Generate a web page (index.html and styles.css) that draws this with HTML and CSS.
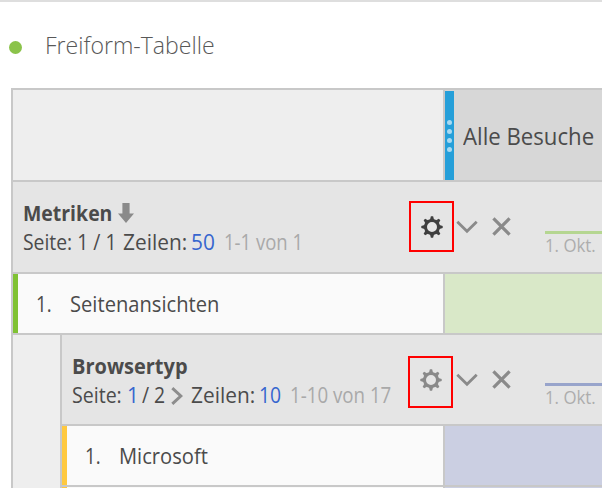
FILE: index.html
```
<!DOCTYPE html>
<html lang="de">
<head>
<meta charset="utf-8">
<title>Freiform-Tabelle</title>
<link rel="stylesheet" href="styles.css">
</head>
<body>
<svg class="defs" aria-hidden="true">
  <symbol id="gear" viewBox="0 0 22 22">
    <circle cx="11" cy="11" r="6.5" fill="none" stroke="currentColor" stroke-width="3"/>
    <g fill="currentColor">
      <path id="tooth" d="M8.800 4.200 9.900 .3h2.200L13.200 4.200z"/>
      <use href="#tooth" transform="rotate(45 11 11)"/>
      <use href="#tooth" transform="rotate(90 11 11)"/>
      <use href="#tooth" transform="rotate(135 11 11)"/>
      <use href="#tooth" transform="rotate(180 11 11)"/>
      <use href="#tooth" transform="rotate(225 11 11)"/>
      <use href="#tooth" transform="rotate(270 11 11)"/>
      <use href="#tooth" transform="rotate(315 11 11)"/>
    </g>
  </symbol>
  <symbol id="chevron" viewBox="0 0 22 14"><path d="M1.3 1.7 11 11.2 20.7 1.7" fill="none" stroke="currentColor" stroke-width="2.8"/></symbol>
  <symbol id="cross" viewBox="0 0 20 20"><path d="M1.5 1.5 18.5 18.5M18.5 1.5 1.5 18.5" fill="none" stroke="currentColor" stroke-width="3.4"/></symbol>
</svg>
<header class="title"><i class="dot"></i><h1>Freiform-Tabelle</h1></header>
<main class="table">
  <div class="row head">
    <div class="corner"></div>
    <div class="segment">
      <div class="grip"><i></i><i></i><i></i><i></i></div>
      <span class="seg-name">Alle Besuche</span>
    </div>
  </div>
  <section class="row group">
    <div class="info">
      <h2><span class="name metrics">Metriken</span><svg class="sort" viewBox="0 0 16 20"><path d="M4.4 0h7.2v10.500H16L8 20 0 10.500h4.400z" fill="#8a8a8a"/></svg></h2>
      <p class="paging"><span class="p-seite">Seite: 1 / 1</span><span class="p-zeilen">Zeilen:</span><a>50</a><span class="range r1">1-1 von 1</span></p>
    </div>
    <div class="tools"><span class="mark"><svg class="gear dark"><use href="#gear"/></svg></span><svg class="chevron"><use href="#chevron"/></svg><svg class="cross" viewBox="0 0 20 20"><use href="#cross"/></svg></div>
    <div class="spark green"><span>1. Okt.</span></div>
  </section>
  <div class="row item green">
    <div class="label"><span class="num">1.</span><span class="wide">Seitenansichten</span></div>
    <div class="cell"></div>
  </div>
  <div class="nested">
    <section class="row group">
      <div class="info">
        <h2><span class="name browser">Browsertyp</span></h2>
        <p class="paging"><span class="n-seite">Seite:</span><a class="n-page">1</a><span class="n-total">/ 2</span><svg class="next" viewBox="0 0 12 18"><path d="M1.300 1.200 9.800 9 1.300 16.800" fill="none" stroke="#8d8d8d" stroke-width="3"/></svg><span class="p-zeilen">Zeilen:</span><a class="n-rows">10</a><span class="range r2">1-10 von 17</span></p>
      </div>
      <div class="tools"><span class="mark"><svg class="gear"><use href="#gear"/></svg></span><svg class="chevron"><use href="#chevron"/></svg><svg class="cross" viewBox="0 0 20 20"><use href="#cross"/></svg></div>
      <div class="spark blue"><span>1. Okt.</span></div>
    </section>
    <div class="row item blue">
      <div class="label"><span class="num">1.</span><span class="wide">Microsoft</span></div>
      <div class="cell"></div>
    </div>
    <div class="row item blue"><div class="label"></div><div class="cell"></div></div>
  </div>
</main>
</body>
</html>
```
FILE: styles.css
```
* { box-sizing: border-box; }
html, body { height: 488px; overflow: hidden; }
body {
  margin: 0;
  background: #fff;
  border-top: 2px solid #dedede;
  color: #4b4b4b;
  font: 400 21.5px/28px "Open Sans", sans-serif;
  white-space: nowrap;
}
h1, h2, p { margin: 0; font-size: inherit; }
svg { display: block; flex: none; }
.defs { position: absolute; width: 0; height: 0; }

/* Narrowed lettering: each text scales from its left edge */
h1, span:not(.mark), a {
  display: block;
  flex: none;
  transform: scaleX(var(--narrow, 0.9));
  transform-origin: 0 50%;
}

.title { display: flex; align-items: center; height: 86px; padding-left: 9px; }
.title .dot { width: 13px; height: 13px; margin: 5px 23px 0 0; border-radius: 50%; background: #8bc34a; }
.title h1 { --narrow: 0.942; margin-top: -1px; font-size: 24.5px; font-weight: 340; color: #585858; }

.table { width: 620px; height: 410px; margin-left: 11px; border: solid #c8c8c8; border-width: 2px 0 0 2px; background: #eee; overflow: hidden; }
.row { display: flex; border-bottom: 2px solid #c8c8c8; }
.corner { width: 430px; background: #eee; }
.head { height: 92px; }
.segment { display: flex; align-items: center; flex: 1; border-left: 2px solid #c8c8c8; background: #d7d7d7; }
.grip { display: flex; flex-direction: column; align-items: center; justify-content: center; gap: 4px; align-self: stretch; width: 9px; margin: 1px 9px 0 0; background: #259fd9; }
.grip i { width: 5px; height: 5px; border-radius: 50%; background: #a8daf2; }
.seg-name { --narrow: 0.925; margin-top: 2px; font-size: 24px; }

.group { height: 92px; background: #e5e5e5; }
.info { flex: 1; padding: 17px 0 0 10px; }
.info h2 { display: flex; height: 29px; font-weight: 700; }
.metrics { --narrow: 0.905; width: 95px; }
.browser { --narrow: 0.93; }
.sort { width: 16px; height: 20px; margin-top: 4px; }
.paging { display: flex; }
.paging a { --narrow: 0.97; color: #3766cf; width: 33px; }
.p-seite { width: 100px; }
.p-zeilen { --narrow: 0.97; width: 68px; }
.range { color: #a9a9a9; }
.r1 { --narrow: 0.86; }
.r2 { --narrow: 0.87; position: relative; left: -2px; }
.n-seite { --narrow: 0.91; width: 55px; }
.paging .n-page { width: 15px; }
.paging .n-rows { --narrow: 0.9; }
.n-total { width: 29px; }
.next { width: 12px; height: 18px; margin: 6px 8px 0 0; }

.tools { display: flex; color: #8a8a8a; }
.mark { display: grid; place-items: center; width: 45px; height: 51px; margin: 19px 2px 0 0; border: 2px solid #f00; }
.gear { width: 22px; height: 22px; }
.gear.dark { color: #3f3f3f; }
.chevron { width: 22px; height: 14px; margin: 38px 14px 0 0; }
.cross { width: 19px; height: 19px; margin: 35px 1px 0 0; }
.spark { width: 86px; margin: 49px 0 0 33px; border-top: 3px solid #b5d691; font-size: 17.500px; line-height: 22px; color: #adadad; }
.spark span { --narrow: 0.96; }
.spark.blue { border-color: #98a4cb; margin-top: 48px; }

.item { height: 61px; }
.label { display: flex; align-items: center; width: 430px; border-left: 5px solid #80c233; background: #fafafa; }
.num { --narrow: 0.87; width: 35px; margin-left: 18px; }
.num + .wide { margin-left: -1px; }
.wide { --narrow: 0.937; }
.cell { flex: 1; border-left: 2px solid #c8c8c8; background: #d9e8c8; }
.nested { margin-left: 47px; border-left: 2px solid #c8c8c8; }
.nested .group { height: 91px; }
.nested .label { width: 381px; border-left-color: #ffc93f; }
.nested .cell { background: #cbcfe2; }
.nested .mark { height: 52px; margin: 21px 3px 0 -1px; padding: 0 0 5px 1px; }
```
